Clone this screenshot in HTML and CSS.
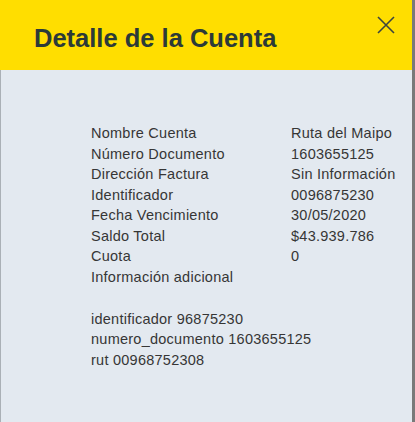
FILE: index.html
```html
<!DOCTYPE html>
<html lang="es">
<head>
    <meta charset="UTF-8">
    <meta name="viewport" content="width=device-width, initial-scale=1.0">
    <title>Detalle de la Cuenta</title>
    <link rel="stylesheet" href="styles.css">
</head>
<body>
    <div class="modal">
        <div class="modal-header">
            <h1>Detalle de la Cuenta</h1>
            <button class="close" type="button" aria-label="Cerrar">
                <svg width="18" height="18" viewBox="0 0 18 18">
                    <path d="M1 1 L17 17 M17 1 L1 17" stroke="#3b4540" stroke-width="1.6" fill="none"/>
                </svg>
            </button>
        </div>

        <div class="modal-body">
            <div class="details">
                <span>Nombre Cuenta</span><span>Ruta del Maipo</span>
                <span>Número Documento</span><span>1603655125</span>
                <span>Dirección Factura</span><span>Sin Información</span>
                <span>Identificador</span><span>0096875230</span>
                <span>Fecha Vencimiento</span><span>30/05/2020</span>
                <span>Saldo Total</span><span>$43.939.786</span>
                <span>Cuota</span><span>0</span>
                <span>Información adicional</span><span></span>
            </div>

            <div class="extra">
                <div>identificador 96875230</div>
                <div>numero_documento 1603655125</div>
                <div>rut 00968752308</div>
            </div>
        </div>
    </div>
</body>
</html>
```

FILE: styles.css
```css
body {
    margin: 0;
    background-color: #7a7a7a;
    font-family: "Liberation Sans", Arial, sans-serif;
}
.modal {
    width: 412px;
    min-height: 100vh;
    display: flex;
    flex-direction: column;
    background-color: #e3e9f0;
}
.modal-header {
    height: 70px;
    background-color: #ffde00;
    display: flex;
    justify-content: space-between;
    align-items: flex-start;
}
.modal-header h1 {
    margin: 23px 0 0 34px;
    font-size: 25.5px;
    line-height: 30px;
    font-weight: bold;
    color: #2c3a38;
}
.close {
    margin: 16px 17px 0 0;
    padding: 0;
    border: none;
    background: none;
    cursor: pointer;
}
.close svg {
    display: block;
}
.modal-body {
    flex: 1;
    border-left: 1px solid #aab0b6;
    padding: 53px 0 0 90px;
    font-size: 14.5px;
    line-height: 20.5px;
    letter-spacing: 0.25px;
    color: #363636;
}
.details {
    display: grid;
    grid-template-columns: 200px auto;
}
.extra {
    margin-top: 21.5px;
}
```
